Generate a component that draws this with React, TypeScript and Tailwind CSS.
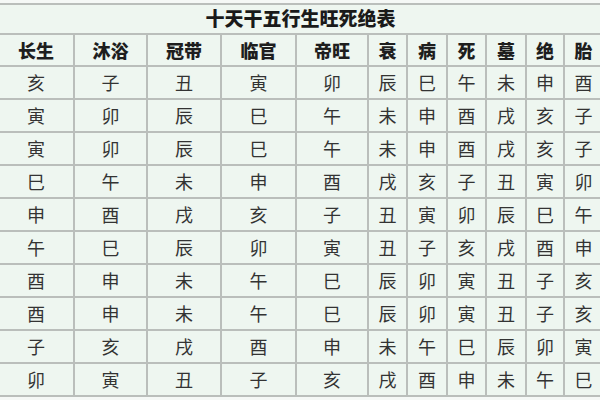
import React from "react";

const headers = ["长生", "沐浴", "冠带", "临官", "帝旺", "衰", "病", "死", "墓", "绝", "胎"];

const rows = [
  ["亥", "子", "丑", "寅", "卯", "辰", "巳", "午", "未", "申", "酉"],
  ["寅", "卯", "辰", "巳", "午", "未", "申", "酉", "戌", "亥", "子"],
  ["寅", "卯", "辰", "巳", "午", "未", "申", "酉", "戌", "亥", "子"],
  ["巳", "午", "未", "申", "酉", "戌", "亥", "子", "丑", "寅", "卯"],
  ["申", "酉", "戌", "亥", "子", "丑", "寅", "卯", "辰", "巳", "午"],
  ["午", "巳", "辰", "卯", "寅", "丑", "子", "亥", "戌", "酉", "申"],
  ["酉", "申", "未", "午", "巳", "辰", "卯", "寅", "丑", "子", "亥"],
  ["酉", "申", "未", "午", "巳", "辰", "卯", "寅", "丑", "子", "亥"],
  ["子", "亥", "戌", "酉", "申", "未", "午", "巳", "辰", "卯", "寅"],
  ["卯", "寅", "丑", "子", "亥", "戌", "酉", "申", "未", "午", "巳"],
];

const App: React.FC = () => {
  return (
    <div
      className="w-[600px] h-[400px] overflow-hidden bg-[#f5f8f6]"
      style={{ fontFamily: '"Noto Sans CJK SC", "Noto Sans", sans-serif' }}
    >
      <div className="mt-[3px] ml-[-3px] w-max grid grid-cols-[74px_71px_72px_73px_70px_37px_38px_37px_38px_36px_37px] grid-rows-[28px_30px_repeat(10,31px)] gap-[2px] p-[2px] bg-[#babebb]">
        {/* 标题 */}
        <div className="col-span-11 flex items-center justify-center bg-[#eef6f0] pb-[2px] text-[19px] font-black text-[#1a1a1a]">
          十天干五行生旺死绝表
        </div>

        {/* 表头 */}
        {headers.map((h) => (
          <div
            key={h}
            className="flex items-center justify-center bg-[#eef6f0] text-[18px] font-black text-[#1e1e1e]"
          >
            {h}
          </div>
        ))}

        {/* 数据 */}
        {rows.map((row, i) =>
          row.map((cell, j) => (
            <div
              key={`${i}-${j}`}
              className="flex items-center justify-center bg-[#eef6f0] text-[18px] text-[#333]"
            >
              {cell}
            </div>
          ))
        )}
      </div>
    </div>
  );
};

export default App;
